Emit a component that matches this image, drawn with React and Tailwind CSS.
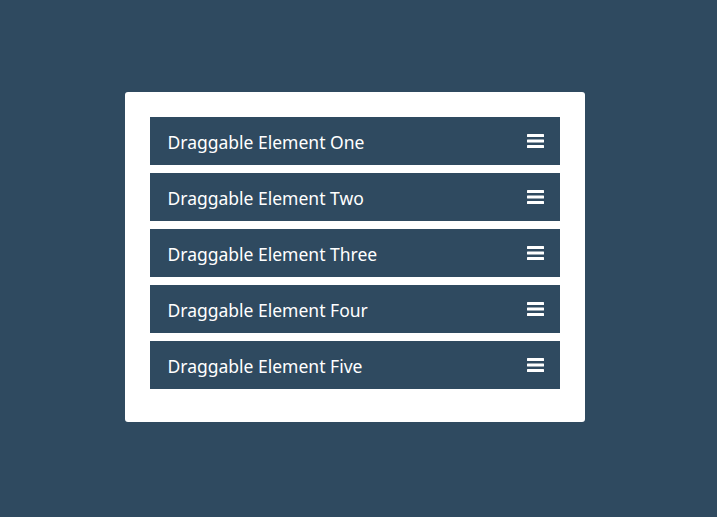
import React from 'react';

const items = ['One', 'Two', 'Three', 'Four', 'Five'];

const Bars = () => (
  <svg width="17" height="14" viewBox="0 0 17 14" className="shrink-0">
    <rect x="0" y="0" width="17" height="3" rx="0.5" fill="#fff" />
    <rect x="0" y="5.5" width="17" height="3" rx="0.5" fill="#fff" />
    <rect x="0" y="11" width="17" height="3" rx="0.5" fill="#fff" />
  </svg>
);

export default function App() {
  return (
    <div className="min-h-screen w-full bg-[#2f4a60] flex items-start justify-center pt-[92px] pr-2" style={{ fontFamily: '"Noto Sans", "Open Sans", sans-serif' }}>
      <div className="w-[460px] bg-white rounded-[3px] px-[25px] pt-[25px] pb-[25px]">
        {items.map((n) => (
          <div key={n} className="h-12 mb-2 bg-[#2f4a60] flex items-center justify-between pl-[18px] pr-4 text-white text-[17.5px]">
            <span className="pt-[3px]">Draggable Element {n}</span>
            <Bars />
          </div>
        ))}
      </div>
    </div>
  );
}
